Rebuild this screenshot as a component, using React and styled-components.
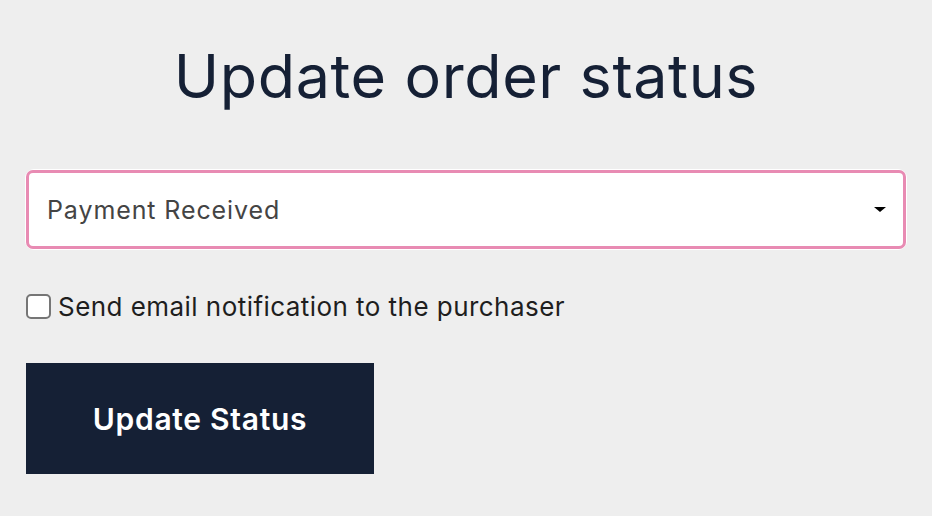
import React, { useState } from 'react';
import styled, { createGlobalStyle } from 'styled-components';

const GlobalStyle = createGlobalStyle`
  html, body {
    margin: 0;
    padding: 0;
    background: #eeeeee;
  }
  body {
    font-family: Inter, 'Noto Sans', sans-serif;
  }
`;

const Page = styled.div`
  display: flex;
  flex-direction: column;
  padding: 0 26px;
`;

const Title = styled.h1`
  margin: 36px 0 0;
  text-align: center;
  font-size: 61px;
  font-weight: 400;
  line-height: 80px;
  color: #152035;
  letter-spacing: 0.6px;
`;

const SelectWrap = styled.div`
  position: relative;
  margin-top: 54px;
  border-radius: 8px;
  box-shadow: 0 0 0 1px #ffffff;
`;

const Select = styled.select`
  appearance: none;
  width: 100%;
  height: 79px;
  box-sizing: border-box;
  padding: 0 18px;
  border: 3px solid #e88bb3;
  border-radius: 7px;
  background: #ffffff;
  font-family: Inter, 'Noto Sans', sans-serif;
  font-size: 25px;
  letter-spacing: 0.9px;
  color: #444444;
  outline: none;
`;

const Caret = styled.span`
  position: absolute;
  right: 20px;
  top: 50%;
  margin-top: -3px;
  width: 0;
  height: 0;
  border-left: 6px solid transparent;
  border-right: 6px solid transparent;
  border-top: 5px solid #000;
  pointer-events: none;
`;

const CheckRow = styled.label`
  display: flex;
  align-items: center;
  gap: 7px;
  margin-top: 42px;
  font-size: 26px;
  letter-spacing: 0.45px;
  color: #1e1e1e;
`;

const Box = styled.input`
  appearance: none;
  flex: none;
  margin: 0;
  width: 25px;
  height: 25px;
  box-sizing: border-box;
  border: 2px solid #767676;
  border-radius: 5px;
  background: #fff;
`;

const Button = styled.button`
  align-self: flex-start;
  margin-top: 41px;
  width: 348px;
  height: 111px;
  border: 0;
  background: #152035;
  color: #ffffff;
  font-family: Inter, 'Noto Sans', sans-serif;
  font-size: 30px;
  font-weight: 600;
  letter-spacing: 0.7px;
`;

export default function App() {
  const [status, setStatus] = useState('received');
  const [notify, setNotify] = useState(false);

  return (
    <>
      <GlobalStyle />
      <Page>
        <Title>Update order status</Title>
        <SelectWrap>
          <Select value={status} onChange={(e) => setStatus(e.target.value)}>
            <option value="pending">Pending Payment</option>
            <option value="received">Payment Received</option>
            <option value="shipped">Shipped</option>
          </Select>
          <Caret />
        </SelectWrap>
        <CheckRow>
          <Box
            type="checkbox"
            checked={notify}
            onChange={(e) => setNotify(e.target.checked)}
          />
          Send email notification to the purchaser
        </CheckRow>
        <Button>Update Status</Button>
      </Page>
    </>
  );
}
